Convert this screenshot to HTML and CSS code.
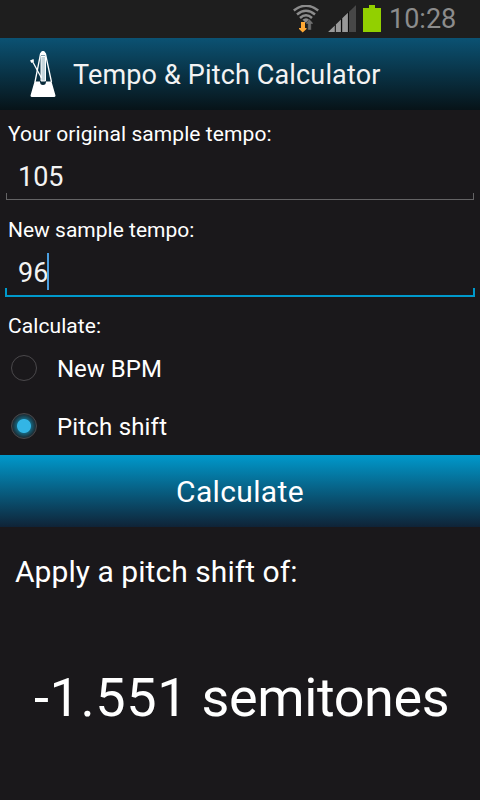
FILE: index.html
```html
<!DOCTYPE html>
<html lang="en">
<head>
  <meta charset="UTF-8" />
  <title>Tempo &amp; Pitch Calculator</title>
  <link rel="stylesheet" href="styles.css">
</head>
<body>
  <div class="status-bar">
    <svg class="wifi" width="28" height="28" viewBox="0 0 28 28">
      <g fill="none" stroke="#8c8c8c" stroke-width="2.500">
        <path d="M.8 5.500Q13 -4 25.200 5.500" />
        <path d="M4 9.500Q13 2 22 9.500" />
        <path d="M7 13Q13 7.500 19 13" />
      </g>
      <path d="M9.500 14.800Q13 11.800 16.500 14.800L13 18Z" fill="#8c8c8c" />
      <path d="M8 17h4v6h1.500v1L9.700 27.500L6 24V23H8Z" fill="#ffa834" />
      <path d="M16.400 14L20 18V19H18.200V25H14.800V19H13V18Z" fill="#6e6e6e" stroke="#1e1e1e" stroke-width=".4" />
    </svg>
    <svg class="signal" width="28" height="27" viewBox="0 0 28 27">
      <path d="M0 27L28 0V27Z" fill="#0c0c0c" />
      <path d="M0 27L6.800 20.400V27ZM7.800 27V19.500L12.900 14.600V27ZM14.200 27V13.300L19.900 7.800V27Z" fill="#999" />
      <path d="M21 27V6.700L28 0V27Z" fill="#474747" />
    </svg>
    <svg class="battery" width="18" height="27" viewBox="0 0 18 27">
      <path d="M6 0H12V3H18V27H0V3H6Z" fill="#92d000" />
    </svg>
    <span class="clock">10:28</span>
  </div>

  <header class="action-bar">
    <svg class="logo" width="26" height="46" viewBox="0 0 26 46">
      <path d="M5 31L10.500 3Q13 -1 15.500 3L21.500 31" fill="none" stroke="#fff" stroke-width="1.300" />
      <path d="M10 4.500Q10.500 0 13 0Q15.500 0 16 4.500Z" fill="#fff" />
      <path d="M11 5.500H15.500V30H11Z" fill="#c5d5db" stroke="#fff" stroke-width="1" />
      <path d="M2 9.500L11.500 27" stroke="#fff" stroke-width="1.300" />
      <path d="M0 9.500L3.500 8L4 10.500L1.500 12Z" fill="#fff" />
      <path d="M4.500 30.500H10Q10 34 13 34Q16 34 16 30.500H21.500L25.500 44.500Q25.500 46 24 46H2Q.5 46 .5 44.500Z" fill="#fff" />
    </svg>
    <h1>Tempo &amp; Pitch Calculator</h1>
  </header>

  <form class="calculator">
    <label class="field-label" for="original">Your original sample tempo:</label>
    <div class="field">
      <input class="tempo" id="original" type="text" value="105">
    </div>
    <label class="field-label new-label">New sample tempo:</label>
    <div class="field focused">
      <span class="tempo">96</span><span class="cursor"></span>
    </div>
    <div class="field-label">Calculate:</div>
    <div class="options">
      <label class="option"><input type="radio" name="mode" value="bpm"><span>New BPM</span></label>
      <label class="option"><input type="radio" name="mode" value="pitch" checked><span class="pitch">Pitch shift</span></label>
    </div>
    <button class="calculate" type="button">Calculate</button>
  </form>

  <div class="result">
    <p class="result-label">Apply a pitch shift of:</p>
    <p class="result-value"><span class="amount">-1.551</span> <span class="unit">semitones</span></p>
  </div>
</body>
</html>
```

FILE: styles.css
```css
* {
  box-sizing: border-box;
}
body {
  background: #1a181b;
  color: #fff;
  font-family: Roboto, "Noto Sans", sans-serif;
  margin: 0;
  height: 800px;
  overflow: hidden;
}
.status-bar {
  display: flex;
  height: 38px;
  background: #1e1e1e;
  padding: 5px 24px 0 0;
  justify-content: flex-end;
}
.signal {
  margin-left: 7px;
}
.battery {
  margin-left: 7px;
}
.clock {
  width: 67px;
  margin-left: 8px;
  color: #8c8c8c;
  font-size: 27px;
  line-height: 28px;
  white-space: nowrap;
}
.action-bar {
  display: flex;
  align-items: center;
  height: 72px;
  padding-left: 30px;
  background: linear-gradient(#0b5273, #071318);
}
h1 {
  margin: 2px 0 0 17px;
  color: #f3f3f3;
  font-size: 27px;
  font-weight: 400;
  letter-spacing: 0.15px;
}
.calculator {
  padding-top: 10px;
}
.field-label {
  display: block;
  height: 28px;
  padding-left: 8px;
  font-size: 21px;
  line-height: 28px;
  letter-spacing: 0.08px;
}
.new-label {
  letter-spacing: 0;
}
.field {
  display: flex;
  align-items: center;
  position: relative;
  height: 52px;
  margin: 0 6px 16px;
  padding: 6px 12px 0;
}
/* holo style underline with short ticks at the ends */
.field::after {
  content: "";
  position: absolute;
  left: 0;
  right: 0;
  bottom: 0;
  height: 6px;
  border: 1px solid #646365;
  border-top: 0;
}
.focused::after {
  left: -1px;
  right: -1px;
  bottom: -1px;
  height: 7px;
  border: 2px solid #0099cc;
  border-top: 0;
}
.tempo {
  padding: 0;
  border: 0;
  outline: 0;
  background: none;
  color: #f3f3f3;
  font: 27px/36px Roboto, "Noto Sans", sans-serif;
}
.cursor {
  width: 2px;
  height: 37px;
  margin: 0 0 4px -1px;
  background: #4b9fe0;
}
.options {
  margin-top: -1px;
}
.option {
  display: flex;
  align-items: center;
  height: 58px;
  padding-left: 11px;
  font-size: 24px;
}
.option input {
  appearance: none;
  width: 26px;
  height: 26px;
  margin: 0 20px 0 0;
  border: 1.5px solid #4a484b;
  border-radius: 50%;
}
.option input:checked {
  background: radial-gradient(circle, #33b5e5 6.5px, #176077 7.5px, #1b343f 11px, #20262b 13px);
}
.option span {
  padding-top: 2px;
}
.pitch {
  letter-spacing: 0.18px;
}
.calculate {
  display: block;
  width: 100%;
  height: 72px;
  padding: 2px 0 0;
  border: 0;
  background: linear-gradient(#0099cc, #0f2337);
  color: #fff;
  font: 30px/70px Roboto, "Noto Sans", sans-serif;
  letter-spacing: 0.35px;
}
.result {
  padding-top: 26px;
}
.result p {
  margin: 0;
  white-space: nowrap;
}
.result-label {
  padding-left: 15px;
  font-size: 30px;
  line-height: 38px;
  letter-spacing: 0.05px;
}
.result-value {
  padding-left: 34px;
  font-size: 54px;
  line-height: 213px;
}
.amount {
  letter-spacing: 0.6px;
}
.unit {
  letter-spacing: -0.4px;
}
```
